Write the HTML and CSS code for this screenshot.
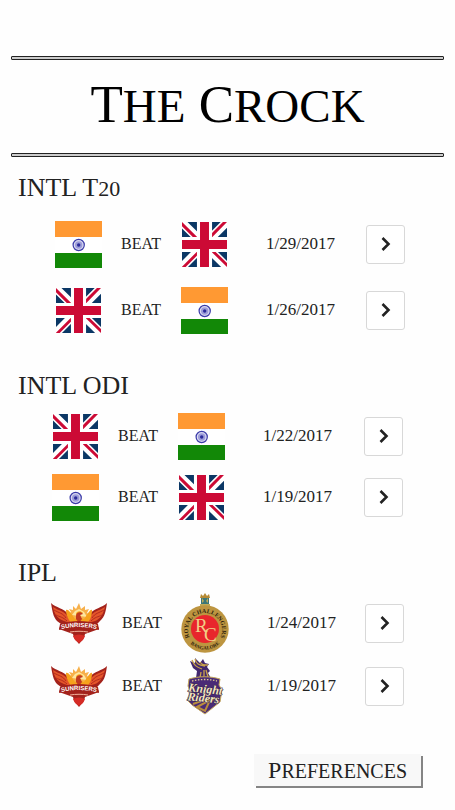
FILE: index.html
```html
<!DOCTYPE html>
<html lang="en">
<head>
<meta charset="utf-8">
<meta name="viewport" content="width=device-width, initial-scale=1">
<title>The Crock</title>
<link rel="stylesheet" href="styles.css">
</head>
<body>
<svg class="sprite" aria-hidden="true">
  <defs>
    <symbol id="india" viewBox="0 0 47 47">
      <path fill="#fff" d="M0 0h47v47H0z"/>
      <path fill="#ff9933" d="M0 0h47v16H0z"/>
      <path fill="#128807" d="M0 32h47v15H0z"/>
      <circle cx="23.700" cy="24" r="5.600" fill="#d9d9f0" stroke="#3a3aa8" stroke-width="1.200"/>
      <circle cx="23.700" cy="24" r="3.700" fill="#9c9cd8"/>
      <circle cx="23.700" cy="24" r="1.700" fill="#2b2b9a"/>
    </symbol>
    <symbol id="uk" viewBox="0 0 512 512">
      <path fill="#0b3765" d="M0 0h512v512H0z"/>
      <path fill="#fff" d="M512 0v64L322 256l190 187v69h-67L254 324 68 512H0v-68l186-187L0 74V0h62l192 188L440 0z"/>
      <path fill="#cc0a35" d="m184 324 11 34L42 512H0v-3zm124-12 54 8 150 147v45zM512 0 320 196l-4-44L466 0zM0 1l193 189-59-8L0 49z"/>
      <path fill="#fff" d="M170 0v512h172V0zM0 170v172h512V170z"/>
      <path fill="#cc0a35" d="M0 205v102h512V205zM205 0v512h102V0z"/>
    </symbol>
    <symbol id="sunrisers" viewBox="0 0 56 42">
      <path fill="#f7b04a" d="m17 13 3-3-2-3 4 1 0-4 3 3 3-6 2 6 4-3 0 4 4-1-2 4 4 2-4 4H19z"/>
      <path fill="#fde7a0" d="m21 13 3-4 4-2 5 3 3 5z"/>
      <path fill="#a3221b" d="M0 1c5 5 13 5 17 11l4 7h14l4-7C43 6 51 6 56 1c-1 7-2 14-7 18l-3 3 2 5-14 5-1 4-5 6-5-6-1-4-14-5 2-5-4-3C2 15 1 7 0 1z"/>
      <path fill="#e4552a" d="M2 5c6 4 12 4 15 10l4 6h14l4-6c3-6 9-6 15-10-2 8-5 12-10 14l-10 3H22l-9-3C7 17 3 12 2 5z"/>
      <path fill="#f6a21c" d="M15 8c3-1 5 4 9 9l2-1-1-4c0-3 5-4 7-1l-3 1 1 4 3 1c4-5 6-10 8-9 0 6-2 11-6 14H21c-3-3-6-9-6-14z"/>
      <path fill="#c33a20" d="M25 14c0-4 5-5 7-2l-3 1 2 4-3 4-3-4z"/>
      <path fill="none" stroke="#b42a1d" stroke-width="1" d="M3 8c5 3 9 3 12 8M5 13c4 2 7 2 11 6M53 8c-5 3-9 3-12 8M51 13c-4 2-7 2-11 6"/>
      <path fill="#a3221b" d="M9 22c12-4 26-4 38 0l1 6c-13-4-27-4-40 0z"/>
      <path id="sunrise-line" fill="none" d="M7 28c13-4 28-4 42 0"/>
      <text class="sunrise-name"><textPath href="#sunrise-line" startOffset="50%">SUNRISERS</textPath></text>
      <path fill="none" stroke="#f2b29b" stroke-width="1" d="M19 30c6-1 12-1 18 0"/>
      <path fill="#d52b25" d="M22 34c4-2 8-2 12 0l-2 4-4 3-4-3z"/>
    </symbol>
    <symbol id="challengers" viewBox="0 0 48 60">
      <path fill="#b58a35" d="m19 5 1-4 2 2 2-3 2 3 2-2 1 4z"/>
      <path fill="#3b7778" d="M20 5h8v6l-4 3-4-3z"/>
      <path fill="#c0ab58" d="m21 5 2 3-2 2zm6 0-2 3 2 2zM19 11h10v2H19z"/>
      <circle cx="24" cy="36" r="23.700" fill="#bd9540"/>
      <circle cx="24" cy="36" r="14" fill="#e8262c"/>
      <path id="ring-top" fill="none" d="M12 49A17 17 0 1 1 36 49"/>
      <path id="ring-bottom" fill="none" d="M4 42A21 21 0 0 0 44 42"/>
      <text class="ring-name"><textPath href="#ring-top" startOffset="50%">ROYAL CHALLENGERS</textPath></text>
      <text class="ring-city"><textPath href="#ring-bottom" startOffset="50%">BANGALORE</textPath></text>
      <text class="monogram" x="14" y="39">R</text>
      <text class="monogram" x="23" y="48">C</text>
    </symbol>
    <symbol id="riders" viewBox="0 0 38 58">
      <path fill="#43286e" d="m10 21 1-7-4-3-3-7 5 2 0-5 5 5 3-4 2 4 4 1-2 3 3 4-2 2 4 7z"/>
      <path fill="none" stroke="#c9a24a" stroke-width="1.300" d="M6 3c2 5 4 7 10 9M9 2c1 5 4 6 10 7M14 5c2 3 4 3 8 3M14 21l1-6M18 21v-8M22 20l-2-7"/>
      <path fill="#4a2b76" stroke="#c5a85c" stroke-width="1" d="M3 22c10-3 21-3 31 0l-1 6 3 5-2 12-15 12L6 48 1 43l3-8-2-6z"/>
      <path fill="none" stroke="#e1cc92" stroke-width="1.300" stroke-dasharray="1.500 1.500" d="M6 24c8-2 17-2 25 0"/>
      <path fill="none" stroke="#b98d3c" stroke-width="2" d="m7 47 11-4 13-1M11 50l13-7-5 11z"/>
      <g transform="rotate(6 19 36)">
        <text class="riders-name" x="19" y="36">Knight</text>
        <text class="riders-name" x="18" y="45">Riders</text>
      </g>
    </symbol>
    <symbol id="chevron" viewBox="0 0 10 16">
      <path fill="none" stroke="#222" stroke-width="2.600" d="m1.500 2 6 6-6 6"/>
    </symbol>
  </defs>
</svg>

<header class="masthead">
  <h1 class="title">T<span class="title-small">HE</span> C<span class="title-small">ROCK</span></h1>
</header>

<main>
  <section class="league t20">
    <h2 class="league-name">INTL T<span class="league-number">20</span></h2>
    <ul class="matches">
      <li class="match">
        <svg class="india" role="img" aria-label="India"><use href="#india"/></svg>
        <span class="verb">BEAT</span>
        <svg class="uk" role="img" aria-label="England"><use href="#uk"/></svg>
        <time class="date" datetime="2017-01-29">1/29/2017</time>
        <button class="open" type="button" aria-label="Open match"><svg class="chevron"><use href="#chevron"/></svg></button>
      </li>
      <li class="match">
        <svg class="uk" role="img" aria-label="England"><use href="#uk"/></svg>
        <span class="verb">BEAT</span>
        <svg class="india" role="img" aria-label="India"><use href="#india"/></svg>
        <time class="date" datetime="2017-01-26">1/26/2017</time>
        <button class="open" type="button" aria-label="Open match"><svg class="chevron"><use href="#chevron"/></svg></button>
      </li>
    </ul>
  </section>

  <section class="league odi">
    <h2 class="league-name">INTL ODI</h2>
    <ul class="matches">
      <li class="match">
        <svg class="uk" role="img" aria-label="England"><use href="#uk"/></svg>
        <span class="verb">BEAT</span>
        <svg class="india" role="img" aria-label="India"><use href="#india"/></svg>
        <time class="date" datetime="2017-01-22">1/22/2017</time>
        <button class="open" type="button" aria-label="Open match"><svg class="chevron"><use href="#chevron"/></svg></button>
      </li>
      <li class="match">
        <svg class="india" role="img" aria-label="India"><use href="#india"/></svg>
        <span class="verb">BEAT</span>
        <svg class="uk" role="img" aria-label="England"><use href="#uk"/></svg>
        <time class="date" datetime="2017-01-19">1/19/2017</time>
        <button class="open" type="button" aria-label="Open match"><svg class="chevron"><use href="#chevron"/></svg></button>
      </li>
    </ul>
  </section>

  <section class="league ipl">
    <h2 class="league-name">IPL</h2>
    <ul class="matches">
      <li class="match">
        <svg class="sunrisers" role="img" aria-label="Sunrisers"><use href="#sunrisers"/></svg>
        <span class="verb">BEAT</span>
        <svg class="challengers" role="img" aria-label="Royal Challengers Bangalore"><use href="#challengers"/></svg>
        <time class="date" datetime="2017-01-24">1/24/2017</time>
        <button class="open" type="button" aria-label="Open match"><svg class="chevron"><use href="#chevron"/></svg></button>
      </li>
      <li class="match">
        <svg class="sunrisers" role="img" aria-label="Sunrisers"><use href="#sunrisers"/></svg>
        <span class="verb">BEAT</span>
        <svg class="riders" role="img" aria-label="Knight Riders"><use href="#riders"/></svg>
        <time class="date" datetime="2017-01-19">1/19/2017</time>
        <button class="open" type="button" aria-label="Open match"><svg class="chevron"><use href="#chevron"/></svg></button>
      </li>
    </ul>
  </section>
</main>

<footer class="footer">
  <button class="preferences" type="button">P<span class="preferences-small">REFERENCES</span></button>
</footer>
</body>
</html>
```
FILE: styles.css
```css
*,
*::before,
*::after {
  box-sizing: border-box;
}

body {
  margin: 0;
  padding-top: 56px;
  background: #fefefe;
  color: #222;
  font-family: "Liberation Serif", serif;
}

.sprite {
  position: absolute;
  width: 0;
  height: 0;
}

/* Masthead between two hollow rules */
.masthead {
  margin: 0 11px 15px;
}

.masthead::before,
.masthead::after {
  content: "";
  display: block;
  height: 4px;
  border: 1px solid #222;
  border-radius: 1px;
  background: #ccc;
}

.title {
  margin: 0;
  padding: 14px 0 18px;
  color: #000;
  font-size: 53px;
  font-weight: 400;
  line-height: 61px;
  text-align: center;
}

.title-small {
  font-size: 47px;
  line-height: 1;
}

/* Leagues */
.league {
  margin-bottom: 30px;
}

.league-name {
  margin: 0 18px 4px;
  font-size: 26px;
  font-weight: 400;
  line-height: 32px;
}

.league-number {
  font-size: 22px;
  line-height: 1;
}

.matches {
  display: grid;
  margin: 0;
  padding: 0 50px;
  list-style: none;
}

.t20 .matches {
  gap: 6px;
  padding-top: 6px;
}

.odi .matches {
  gap: 1px;
  padding: 0 52px 0 47px;
}

.ipl .matches {
  gap: 3px;
  padding: 0 51px;
}

.match {
  display: grid;
  grid-template-columns: 56px 70px 56px 1fr 39px;
  align-items: center;
  justify-items: center;
  height: 60px;
}

.verb {
  font-size: 16px;
  line-height: 20px;
}

.date {
  justify-self: start;
  padding-left: 34px;
  font-size: 17px;
  line-height: 20px;
}

.open {
  display: grid;
  place-items: center;
  width: 39px;
  height: 39px;
  padding: 0;
  border: 1px solid #d8d8d8;
  border-radius: 3px;
  background: #fff;
}

.chevron {
  width: 10px;
  height: 16px;
}

/* Team marks */
.india {
  width: 47px;
  height: 47px;
}

.uk {
  width: 45px;
  height: 45px;
}

.sunrisers {
  width: 56px;
  height: 42px;
}

.challengers {
  width: 48px;
  height: 60px;
}

.riders {
  width: 38px;
  height: 58px;
}

.sunrise-name {
  fill: #fff;
  font: bold 6px "Liberation Sans", sans-serif;
  text-anchor: middle;
}

.ring-name,
.ring-city {
  fill: #30230d;
  font: bold 6px "Liberation Serif", serif;
  text-anchor: middle;
}

.ring-city {
  font-size: 5px;
}

.monogram {
  fill: #f2cf86;
  font: 19px "Liberation Serif", serif;
}

.riders-name {
  fill: #f4e7bd;
  stroke: #31204e;
  stroke-width: 1px;
  paint-order: stroke;
  font: italic bold 12px "Liberation Serif", serif;
  text-anchor: middle;
}

/* Footer */
.footer {
  display: flex;
  justify-content: flex-end;
  padding: 8px 34px 20px;
}

.preferences {
  padding: 0 14px;
  border: 0;
  background: #f8f8f8;
  box-shadow: 2px 2px 0 #858585;
  color: #222;
  font-family: inherit;
  font-size: 24px;
  line-height: 32px;
}

.preferences-small {
  font-size: 20px;
  line-height: 1;
}
```
